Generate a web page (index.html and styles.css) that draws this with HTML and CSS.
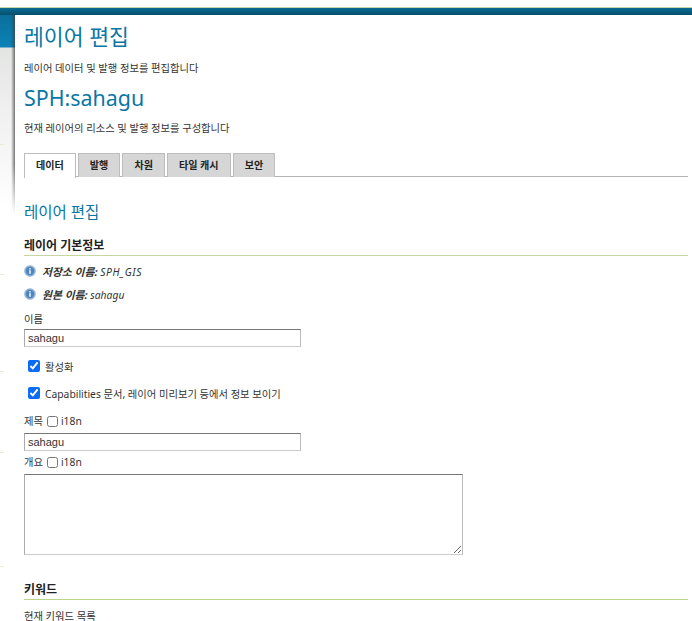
FILE: index.html
```html
<!DOCTYPE html>
<html lang="ko">
<head>
<meta charset="utf-8">
<title>레이어 편집</title>
<link rel="stylesheet" href="styles.css">
</head>
<body>
<div class="topbar"></div>
<div class="shell">
  <div class="side"></div>
  <main class="card">
    <h1 class="page-title">레이어 편집</h1>
    <p class="desc desc-first">레이어 데이터 및 발행 정보를 편집합니다</p>
    <h2 class="layer-title">SPH:sahagu</h2>
    <p class="desc desc-second">현재 레이어의 리소스 및 발행 정보를 구성합니다</p>
    <div class="tabs">
      <span class="tab tab-active">데이터</span>
      <span class="tab">발행</span>
      <span class="tab">차원</span>
      <span class="tab">타일 캐시</span>
      <span class="tab">보안</span>
    </div>
    <h3 class="section-title">레이어 편집</h3>
    <h4 class="group-title">레이어 기본정보</h4>
    <div class="info info-first">
      <svg class="info-icon" viewBox="0 0 12 12" width="12" height="12"><circle cx="6" cy="6" r="5.8" fill="#8fb2d6"/><circle cx="6" cy="6" r="4.2" fill="#4f86bd"/><rect x="5.2" y="5.2" width="1.6" height="3.6" fill="#e9f1f8"/><rect x="5.2" y="3.1" width="1.6" height="1.4" fill="#e9f1f8"/></svg>
      <span><b>저장소 이름:</b> <span class="store-name">SPH_GIS</span></span>
    </div>
    <div class="info">
      <svg class="info-icon" viewBox="0 0 12 12" width="12" height="12"><circle cx="6" cy="6" r="5.8" fill="#8fb2d6"/><circle cx="6" cy="6" r="4.2" fill="#4f86bd"/><rect x="5.2" y="5.2" width="1.6" height="3.6" fill="#e9f1f8"/><rect x="5.2" y="3.1" width="1.6" height="1.4" fill="#e9f1f8"/></svg>
      <span><b>원본 이름:</b> sahagu</span>
    </div>
    <label class="field-label name-label" for="name">이름</label>
    <input class="text-input" id="name" type="text" value="sahagu">
    <label class="check-row check-first"><input type="checkbox" checked><span>활성화</span></label>
    <label class="check-row check-second"><input type="checkbox" checked><span>Capabilities 문서, 레이어 미리보기 등에서 정보 보이기</span></label>
    <div class="field-label i18n title-label">제목 <input class="mini-check" type="checkbox"> i18n</div>
    <input class="text-input title-input" type="text" value="sahagu">
    <div class="field-label i18n abstract-label">개요 <input class="mini-check" type="checkbox"> i18n</div>
    <textarea class="text-area"></textarea>
    <h4 class="group-title keyword-title">키워드</h4>
    <p class="desc keyword-desc">현재 키워드 목록</p>
  </main>
</div>
</body>
</html>
```
FILE: styles.css
```css
* { box-sizing: border-box; }
html, body { margin: 0; padding: 0; height: 621px; overflow: hidden; background: #fff; }
body {
  padding-top: 7px;
  font-family: "Noto Sans", "Noto Sans CJK KR", sans-serif;
  font-size: 10.3px;
  color: #333;
}
.topbar {
  height: 8px;
  border-top: 1px solid #c3d6a8;
  background: linear-gradient(#0d6a94, #04506b);
}
.shell { display: grid; grid-template-columns: 15px 1fr; height: 606px; }
.side {
  position: relative;
  background:
    linear-gradient(#e4eed6, #e4eed6) 0 129px / 4px 1px no-repeat,
    linear-gradient(#e4eed6, #e4eed6) 0 259px / 4px 1px no-repeat,
    linear-gradient(#e4eed6, #e4eed6) 0 356px / 4px 1px no-repeat,
    linear-gradient(#e4eed6, #e4eed6) 0 437px / 4px 1px no-repeat,
    linear-gradient(#e4eed6, #e4eed6) 0 551px / 4px 1px no-repeat,
    linear-gradient(#0a6f9c 0, #0c82b6 32px, #e3e5e3 33px, #f2f2f2 110px, #fff 195px) 0 0 / 100% 195px no-repeat;
}
.side::after {
  content: "";
  position: absolute;
  right: 0; top: 0;
  width: 4px;
  height: 200px;
  background: linear-gradient(to right, rgba(60,60,60,0), rgba(60,60,60,.7));
  -webkit-mask-image: linear-gradient(#000 75%, transparent);
  mask-image: linear-gradient(#000 75%, transparent);
}
.card {
  background: #fff;
  border-top-left-radius: 10px;
  padding: 0 4px 0 9px;
  min-width: 0;
}
h1, h2, h3, h4, p { margin: 0; font-weight: normal; }
.page-title { font-size: 21.6px; line-height: 30px; padding-top: 7px; height: 37px; color: #0a76a5; }
.desc { font-size: 10.3px; line-height: 14px; color: #333; }
.desc-first { margin-top: 9px; }
.layer-title { font-size: 21.4px; line-height: 28px; margin-top: 9px; color: #0a76a5; }
.desc-second { margin-top: 9px; }
.tabs { display: flex; gap: 2px; margin-top: 18px; border-bottom: 1px solid #b5b5b5; height: 24px; }
.tab {
  height: 24px;
  padding: 0 11px;
  background: #d6d6d6;
  border: 1px solid #bdbdbd;
  border-bottom: 0;
  font-size: 10.08px;
  font-weight: bold;
  line-height: 22px;
  color: #222;
}
.tab-active { background: #fff; height: 25px; position: relative; }
.section-title { font-size: 15.5px; line-height: 22px; margin-top: 24px; color: #0a76a5; }
.group-title {
  font-size: 12px;
  font-weight: bold;
  line-height: 18px;
  color: #222;
  border-bottom: 1px solid #c5d6a0;
  margin-top: 14px;
  height: 19px;
}
.info { display: flex; align-items: center; gap: 6px; font-size: 10.3px; font-style: italic; height: 14px; margin-top: 9px; }
.info-first { margin-top: 8px; }
.info b { font-weight: bold; font-size: 10.8px; }
.store-name { letter-spacing: .6px; }
.info-icon { flex: none; }
.field-label { display: block; font-size: 10.3px; line-height: 14px; }
.name-label { margin-top: 11px; }
.text-input {
  display: block;
  width: 277px;
  height: 18px;
  margin: 3px 0 0;
  padding: 0 3px;
  border: 1px solid;
  border-color: #767676 #bbb #ccc #aaa;
  font: 11px "Liberation Sans", sans-serif;
  color: #333;
  background: #fff;
}
.title-input { margin-top: 5px; }
.check-row { display: flex; align-items: center; gap: 5px; padding-left: 4px; height: 16px; }
.check-row input { margin: 0; width: 12px; height: 12px; accent-color: #0a6cf5; }
.check-first { margin-top: 11px; }
.check-second { margin-top: 11px; }
.i18n { display: flex; align-items: center; gap: 3px; }
.mini-check { margin: 0 0 0 1px; width: 11px; height: 11px; }
.title-label { margin-top: 13px; }
.abstract-label { margin-top: 4px; }
.text-area {
  display: block;
  width: 439px;
  height: 81px;
  margin: 5px 0 0;
  border: 1px solid;
  border-color: #767676 #bbb #ccc #aaa;
  background: #fff;
}
.keyword-title { margin-top: 26px; border-bottom-color: #b9d68a; }
.keyword-desc { margin-top: 11px; line-height: 10px; }
```
